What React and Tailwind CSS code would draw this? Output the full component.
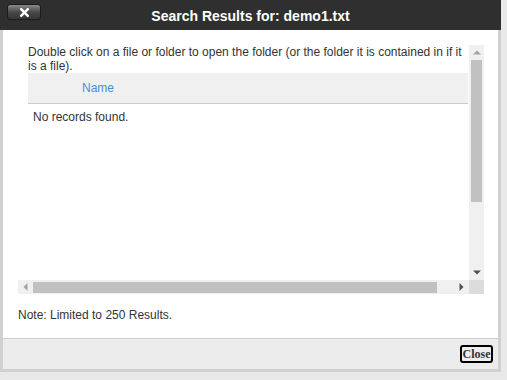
export default function App() {
  return (
    <div className="w-[507px] h-[380px] bg-[#e9e9e9] font-['Liberation_Sans',Arial,sans-serif]">
      <div className="w-[501px] h-[372px] flex flex-col">
        <div className="relative h-[30px] bg-[#2f2f2f] flex items-center justify-center">
          <div className="absolute left-[7px] top-[4px] w-[34px] h-[16px] rounded-[3px] border border-[#1c1c1c] bg-gradient-to-b from-[#8a8a8a] via-[#4a4a4a] to-[#353535] flex items-center justify-center">
            <svg width="9" height="9" viewBox="0 0 9 9">
              <path d="M1.2 1.2 L7.8 7.8 M7.8 1.2 L1.2 7.8" stroke="#ffffff" strokeWidth="2.4" strokeLinecap="square" />
            </svg>
          </div>
          <div className="text-white font-bold text-[14px] leading-none pt-[1px]">Search Results for: demo1.txt</div>
        </div>
        <div className="flex-1 flex flex-col bg-white border-x-[3px] border-[#d0d0d0]">
          <div className="pl-[15px] pt-[15px]">
            <div className="w-[466px] h-[249px] flex flex-col">
              <div className="flex flex-1">
                <div className="w-[451px] pl-[10px] text-[12px] text-[#333] leading-[14px]">
                  <div className="w-[440px]">
                    Double click on a file or folder to open the folder (or the folder it is contained in if it is a file).
                  </div>
                  <div className="w-[440px] h-[31px] bg-[#f0f0f0] border-b border-[#cccccc] flex items-center pl-[54px] text-[#4a8fd4]">
                    Name
                  </div>
                  <div className="pl-[5px] pt-[6px]">No records found.</div>
                </div>
                <div className="w-[15px] bg-[#f0f0f0] flex flex-col items-center">
                  <div className="h-[15px] flex items-center justify-center">
                    <svg width="8" height="5" viewBox="0 0 8 5"><path d="M0 4.5 L4 0.5 L8 4.5 Z" fill="#a3a3a3" /></svg>
                  </div>
                  <div className="w-[11px] h-[142px] bg-[#c1c1c1]" />
                  <div className="flex-1" />
                  <div className="h-[15px] flex items-center justify-center">
                    <svg width="8" height="5" viewBox="0 0 8 5"><path d="M0 0.5 L4 4.5 L8 0.5 Z" fill="#505050" /></svg>
                  </div>
                </div>
              </div>
              <div className="flex h-[14px]">
                <div className="w-[451px] bg-[#f0f0f0] flex items-center">
                  <div className="w-[15px] flex items-center justify-center">
                    <svg width="5" height="8" viewBox="0 0 5 8"><path d="M4.5 0 L0.5 4 L4.5 8 Z" fill="#a3a3a3" /></svg>
                  </div>
                  <div className="flex-1 flex items-center">
                    <div className="w-[404px] h-[11px] bg-[#c1c1c1]" />
                  </div>
                  <div className="w-[15px] flex items-center justify-center">
                    <svg width="5" height="8" viewBox="0 0 5 8"><path d="M0.5 0 L4.5 4 L0.5 8 Z" fill="#505050" /></svg>
                  </div>
                </div>
                <div className="w-[15px] bg-[#dcdcdc]" />
              </div>
            </div>
            <div className="pt-[14px] text-[12px] text-[#333] leading-[14px]">Note: Limited to 250 Results.</div>
          </div>
          <div className="flex-1" />
          <div className="h-[34px] bg-[#ececec] border-t border-[#cccccc] border-b-[3px] border-b-[#d0d0d0] flex justify-end items-start pr-[5px] pt-[6px]">
            <button className="h-[18px] w-[33px] rounded-[3px] border-2 border-black bg-[#eeeeee] text-[12px] font-bold text-[#333] leading-none font-['Liberation_Serif',serif] flex items-center justify-center">
              Close
            </button>
          </div>
        </div>
      </div>
    </div>
  );
}
